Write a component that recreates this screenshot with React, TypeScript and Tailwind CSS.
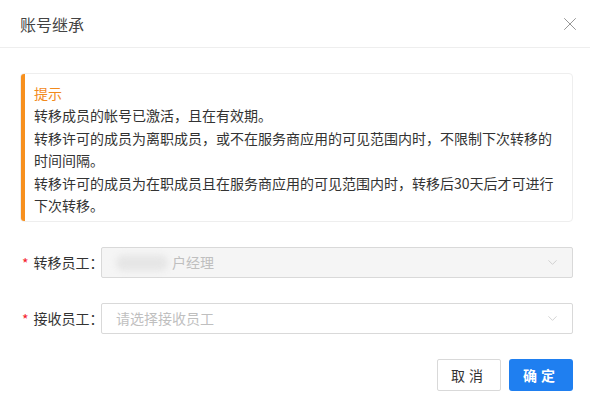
import { ChevronDown, X } from "lucide-react";

const tips = [
  "转移成员的帐号已激活，且在有效期。",
  "转移许可的成员为离职成员，或不在服务商应用的可见范围内时，不限制下次转移的",
  "时间间隔。",
  "转移许可的成员为在职成员且在服务商应用的可见范围内时，转移后30天后才可进行",
  "下次转移。",
];

function Field({
  label,
  disabled,
  children,
}: {
  label: string;
  disabled?: boolean;
  children: React.ReactNode;
}) {
  return (
    <div className="flex h-[31px] items-center">
      <div className="flex w-[101px] shrink-0 items-center pl-[22px] text-[14px] text-[#333]">
        <span className="mr-[5px] mt-[2px] text-[#f5222d]">*</span>
        <span className="whitespace-nowrap">{label}：</span>
      </div>
      <div
        className={
          disabled
            ? "flex h-[31px] flex-1 items-center justify-between rounded-[2px] border border-[#d9d9d9] bg-[#f5f5f5] pl-[14px] pr-[12px]"
            : "flex h-[31px] flex-1 items-center justify-between rounded-[2px] border border-[#d9d9d9] bg-white pl-[14px] pr-[12px]"
        }
      >
        <div className="flex items-center text-[14px] text-[#bfbfbf]">{children}</div>
        <ChevronDown className="h-[15px] w-[15px] text-[#c4c4c4]" strokeWidth={1.2} />
      </div>
    </div>
  );
}

export default function App() {
  return (
    <div
      className="h-[403px] w-[590px] bg-white"
      style={{ fontFamily: '"Noto Sans CJK SC", "Noto Sans", sans-serif' }}
    >
      <div className="flex h-[48px] items-center justify-between border-b border-[#eeeeee] pl-[20px] pr-[9px]">
        <span className="text-[16px] text-[#444]">账号继承</span>
        <X className="h-[22px] w-[22px] text-[#8c8c8c]" strokeWidth={1} />
      </div>

      <div className="pl-[20px] pr-[17px] pt-[25px]">
        <div className="flex h-[149px] overflow-hidden rounded-[4px] border border-[#eeeeee]">
          <div className="w-[4px] shrink-0 bg-[#f7901e]" />
          <div className="pl-[9px] pt-[8px] text-[14px] leading-[22.4px] text-[#333]">
            <div className="text-[#f28a1c]">提示</div>
            {tips.map((t) => (
              <div key={t} className="whitespace-nowrap">
                {t}
              </div>
            ))}
          </div>
        </div>
      </div>

      <div className="flex flex-col gap-[25px] pr-[17px] pt-[25px]">
        <Field label="转移员工" disabled>
          <span className="mr-[4px] h-[16px] w-[52px] rounded-full bg-[#e6e6e6] blur-[3px]" />
          <span>户经理</span>
        </Field>
        <Field label="接收员工">
          <span>请选择接收员工</span>
        </Field>
      </div>

      <div className="flex justify-end gap-[8px] pr-[17px] pt-[25px]">
        <button className="h-[32px] w-[64px] rounded-[2px] border border-[#d9d9d9] bg-white text-[14px] tracking-[4px] text-[#333]">
          取消
        </button>
        <button className="h-[32px] w-[64px] rounded-[3px] bg-[#1f7ff0] text-[14px] font-bold tracking-[4px] text-white">
          确定
        </button>
      </div>
    </div>
  );
}
